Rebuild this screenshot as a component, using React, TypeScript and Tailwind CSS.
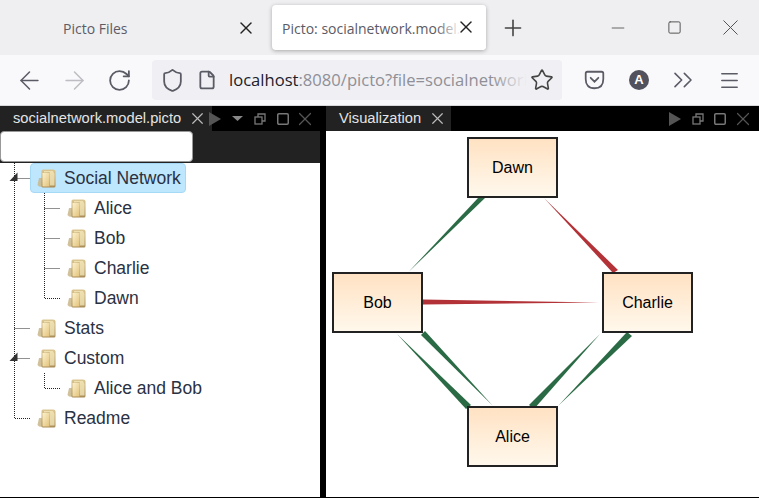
import React from 'react';
import { X, Plus, ArrowLeft, ArrowRight, RotateCw, Shield, File, Star, Minus, Square, ChevronsRight, Menu } from 'lucide-react';

const Folder = () => (
  <svg width="22" height="22" viewBox="0 0 22 22" className="shrink-0">
    <defs>
      <linearGradient id="fa" x1="0" y1="0" x2="1" y2="1">
        <stop offset="0" stopColor="#fbf1cc" />
        <stop offset="1" stopColor="#e3c27c" />
      </linearGradient>
      <linearGradient id="fb" x1="0" y1="0" x2="0" y2="1">
        <stop offset="0" stopColor="#dcc894" />
        <stop offset="1" stopColor="#a98c56" />
      </linearGradient>
    </defs>
    <path d="M3 19.5 L1.5 18 L3 11 L7 11 L7 20 Z" fill="#c9b68a" opacity="0.85" />
    <path d="M5.5 4 Q5.5 2.5 7 2.5 L17 2.5 Q19.5 2.5 19.5 4.5 L19.5 19 Q19.5 20.5 18 20.5 L7 20.5 Q5.5 20.5 5.5 19 Z" fill="url(#fb)" />
    <path d="M8 5.5 L13 5 Q14 5 14 6 L14 18.5 L18.5 18.5 L18.5 7 L17 4 L8 4 Z" fill="#f6e9bd" opacity="0.75" />
    <path d="M6.5 6 L13.5 6 L13.5 19.5 L6.5 19.5 Z" fill="url(#fa)" />
  </svg>
);

const TreeRow = ({ label, depth = 0, selected = false }: { label: string; depth?: number; selected?: boolean }) => (
  <div className={depth === 1 ? 'h-[30px] flex items-center pl-[60px]' : 'h-[30px] flex items-center pl-[30px]'}>
    <div
      className={
        selected
          ? 'h-[30px] flex items-center gap-[6px] pl-[5px] pr-1 bg-[#bee6fd] border border-[#a6d9f6] rounded-sm'
          : 'h-[30px] flex items-center gap-[6px] pl-[6px] pr-1'
      }
    >
      <Folder />
      <span className="text-[17.5px] text-[#2a3142] leading-none pt-[2px]">{label}</span>
    </div>
  </div>
);

// dotted connector lines and the expand arrows of the tree
const TreeLines = () => (
  <svg className="absolute left-0 top-0" width="120" height="335" fill="none">
    <g stroke="#222" strokeWidth="1" strokeDasharray="1 1">
      <path d="M14.5 0V255.5H30" />
      <path d="M14.5 15.5H30M14.5 165.5H30M14.5 195.5H30" />
      <path d="M44.5 30V135.5H60" />
      <path d="M44.5 45.5H60M44.5 75.5H60M44.5 105.5H60" />
      <path d="M44.5 210V225.5H60" />
    </g>
    <path d="M17.5 9.5V18H9.5Z" fill="#333" />
    <path d="M17.5 189.5V198H9.5Z" fill="#333" />
  </svg>
);

const Restore = () => (
  <svg width="12" height="12" viewBox="0 0 12 12" fill="none" stroke="#777" strokeWidth="1.3">
    <rect x="1" y="4" width="7" height="7" />
    <path d="M4 4V1H11V8H8" />
  </svg>
);

const PanelSlot = ({ children }: { children: React.ReactNode }) => (
  <div className="w-[22.5px] flex items-center justify-center">{children}</div>
);

const PanelButtons = ({ caret = false }: { caret?: boolean }) => (
  <>
    <PanelSlot>
      <svg width="12" height="14" viewBox="0 0 12 14"><path d="M0 0L12 7L0 14Z" fill="#555" /></svg>
    </PanelSlot>
    {caret && (
      <PanelSlot>
        <svg width="11" height="5" viewBox="0 0 11 5"><path d="M0 0H11L5.5 5Z" fill="#888" /></svg>
      </PanelSlot>
    )}
    <PanelSlot><Restore /></PanelSlot>
    <PanelSlot><Square size={14} color="#777" strokeWidth={1.5} absoluteStrokeWidth /></PanelSlot>
    <PanelSlot><X size={22} color="#555" strokeWidth={1.2} absoluteStrokeWidth className="shrink-0" /></PanelSlot>
  </>
);

const PanelTab = ({ label, width }: { label: string; width: string }) => (
  <div className={`${width} h-[25px] shrink-0 bg-[#222] flex items-center pl-[13px] text-[14.7px] text-[#e4e4e4]`}>
    <span>{label}</span>
    <div className="w-5 ml-[6px] flex justify-center">
      <X size={19} color="#bbb" strokeWidth={1.2} absoluteStrokeWidth className="shrink-0" />
    </div>
  </div>
);

const edges: { points: string; fill: string }[] = [
  { points: '478,198 485,198 408.5,272', fill: '#2a6b45' },
  { points: '544,198 618,270 613,273', fill: '#b23237' },
  { points: '423,299.5 423,304.5 599,302.5', fill: '#b23237' },
  { points: '425,331 421,335 493,406', fill: '#2a6b45' },
  { points: '397,334 471,405 466,409', fill: '#2a6b45' },
  { points: '600,334 534,409 529,405', fill: '#2a6b45' },
  { points: '627,332 632,336 558,406', fill: '#2a6b45' },
];

const GraphNode = ({ label, x, y }: { label: string; x: number; y: number }) => (
  <div
    className="absolute w-[91px] h-[61px] flex items-center justify-center border-2 border-[#222] bg-gradient-to-b from-[#ffe2c3] to-[#fff8ec] text-[16px] text-black"
    style={{ left: x, top: y }}
  >
    {label}
  </div>
);

const ToolSlot = ({ width, children }: { width: string; children: React.ReactNode }) => (
  <div className={`${width} shrink-0 flex items-center justify-center`}>{children}</div>
);

export default function App() {
  return (
    <div className="w-[759px] h-[498px] overflow-hidden flex flex-col bg-black font-['Liberation_Sans',sans-serif]">
      {/* browser tabs */}
      <div className="h-[55px] shrink-0 bg-[#efeff1] flex items-start font-['Open_Sans',sans-serif] text-[14px] text-[#5b5b66]">
        <div className="w-[272px] h-[55px] flex items-center pl-[63px] pr-[16px] justify-between">
          <span className="text-[#5c5c66] pt-[2px]">Picto Files</span>
          <X size={20} color="#222" strokeWidth={1.4} absoluteStrokeWidth />
        </div>
        <div className="relative mt-[5px] w-[214px] h-[45px] bg-white rounded shadow-[0_1px_4px_rgba(0,0,0,0.3)] flex items-center pl-[10px] overflow-hidden">
          <span className="whitespace-nowrap pt-[2px]">Picto: socialnetwork.model.picto</span>
          <div className="absolute right-0 top-0 h-full w-[50px] bg-gradient-to-r from-transparent via-white to-white" />
          <X size={20} color="#222" strokeWidth={1.4} absoluteStrokeWidth className="absolute right-[10px] top-[12px]" />
        </div>
        <div className="ml-[14px] mt-[15px]"><Plus size={26} color="#444" strokeWidth={1.6} absoluteStrokeWidth /></div>
        <div className="ml-auto flex items-center h-[55px] pr-px">
          <ToolSlot width="w-[56px]"><Minus size={20} color="#666" strokeWidth={1} absoluteStrokeWidth /></ToolSlot>
          <ToolSlot width="w-[56px]"><Square size={15} color="#555" strokeWidth={1} absoluteStrokeWidth /></ToolSlot>
          <ToolSlot width="w-[56px]"><X size={27} color="#555" strokeWidth={1} absoluteStrokeWidth /></ToolSlot>
        </div>
      </div>

      {/* browser toolbar */}
      <div className="h-[51px] shrink-0 bg-[#f9f9fb] flex items-center pl-[7px] border-b border-[#d8d8da]">
        <ToolSlot width="w-[45px]"><ArrowLeft size={29} color="#5b5b66" strokeWidth={1.5} absoluteStrokeWidth /></ToolSlot>
        <ToolSlot width="w-[45px]"><ArrowRight size={29} color="#bdbdc2" strokeWidth={1.5} absoluteStrokeWidth /></ToolSlot>
        <ToolSlot width="w-[45px]"><RotateCw size={25} color="#5b5b66" strokeWidth={1.8} absoluteStrokeWidth /></ToolSlot>
        <div className="ml-[10px] w-[410px] h-[40px] shrink-0 bg-[#f0f0f4] rounded flex items-center relative overflow-hidden">
          <ToolSlot width="w-[40px]"><Shield size={25} color="#5b5b66" strokeWidth={1.8} absoluteStrokeWidth /></ToolSlot>
          <ToolSlot width="w-[30px]"><File size={20} color="#5b5b66" strokeWidth={1.8} absoluteStrokeWidth /></ToolSlot>
          <span className="ml-[7px] whitespace-nowrap font-['Open_Sans',sans-serif] text-[16.6px] text-[#8f8f97]">
            <span className="text-[#20202a]">localhost</span>:8080/picto?file=socialnetwork.model.picto
          </span>
          <div className="absolute right-0 top-0 h-full w-[70px] bg-gradient-to-r from-transparent via-[#f0f0f4] to-[#f0f0f4]" />
          <Star size={24} color="#444" strokeWidth={1.6} absoluteStrokeWidth className="absolute right-[8px] top-[8px]" />
        </div>
        <div className="ml-[10px] flex items-center">
          <ToolSlot width="w-[44px]">
            <svg width="23" height="22" viewBox="0 0 20 20" fill="none" stroke="#5b5b66" strokeWidth="1.6">
              <path d="M3.5 2.5H16.5Q18 2.5 18 4V9Q18 17.5 10 17.5Q2 17.5 2 9V4Q2 2.5 3.5 2.5Z" />
              <path d="M6.5 8L10 11.5L13.5 8" strokeLinecap="round" />
            </svg>
          </ToolSlot>
          <ToolSlot width="w-[46px]">
            <div className="w-5 h-5 rounded-full bg-[#52525e] flex items-center justify-center text-white text-[13px] font-bold">A</div>
          </ToolSlot>
          <ToolSlot width="w-[42px]"><ChevronsRight size={32} color="#5b5b66" strokeWidth={1.6} absoluteStrokeWidth /></ToolSlot>
          <ToolSlot width="w-[50px]"><Menu size={23} color="#5b5b66" strokeWidth={1.6} absoluteStrokeWidth /></ToolSlot>
        </div>
      </div>

      {/* panels */}
      <div className="flex-1 flex gap-[6px] pb-px min-h-0">
        <div className="w-[320px] flex flex-col shrink-0">
          <div className="h-[25px] shrink-0 flex items-center">
            <PanelTab label="socialnetwork.model.picto" width="w-[212px]" />
            <div className="-ml-[8px] flex items-center">
              <PanelButtons caret />
            </div>
          </div>
          <div className="h-[32px] shrink-0 bg-[#222]">
            <input className="block w-[193px] h-[31px] bg-white border border-[#999] rounded-sm" />
          </div>
          <div className="flex-1 bg-white relative">
            <TreeLines />
            <TreeRow label="Social Network" selected />
            <TreeRow label="Alice" depth={1} />
            <TreeRow label="Bob" depth={1} />
            <TreeRow label="Charlie" depth={1} />
            <TreeRow label="Dawn" depth={1} />
            <TreeRow label="Stats" />
            <TreeRow label="Custom" />
            <TreeRow label="Alice and Bob" depth={1} />
            <TreeRow label="Readme" />
          </div>
        </div>

        <div className="flex-1 flex flex-col min-w-0">
          <div className="h-[25px] shrink-0 flex items-center pr-[5px]">
            <PanelTab label="Visualization" width="w-[125px]" />
            <div className="ml-auto flex items-center">
              <PanelButtons />
            </div>
          </div>
          {/* free canvas: node coordinates are the content */}
          <div className="flex-1 bg-white relative">
            <svg className="absolute left-0 top-0" width="433" height="366" viewBox="326 131 433 366">
              {edges.map((e) => (
                <polygon key={e.points} points={e.points} fill={e.fill} />
              ))}
            </svg>
            <GraphNode label="Dawn" x={141} y={6} />
            <GraphNode label="Bob" x={6} y={141} />
            <GraphNode label="Charlie" x={276} y={141} />
            <GraphNode label="Alice" x={141} y={275} />
          </div>
        </div>
      </div>
    </div>
  );
}
